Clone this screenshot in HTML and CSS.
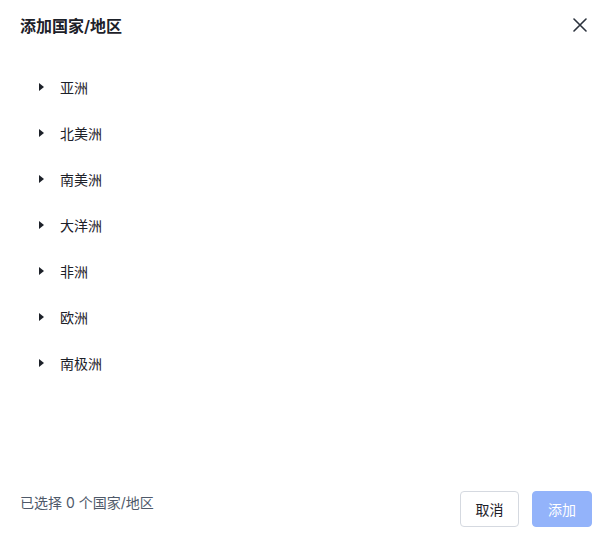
FILE: index.html
```html
<!DOCTYPE html>
<html lang="zh-CN">
<head>
    <meta charset="UTF-8">
    <meta name="viewport" content="width=device-width, initial-scale=1.0">
    <title>添加国家/地区</title>
    <link rel="stylesheet" href="styles.css">
</head>
<body>
    <div class="modal">
        <div class="modal-header">
            <span class="modal-title">添加国家/地区</span>
            <button class="close-btn" aria-label="关闭">
                <svg width="14" height="14" viewBox="0 0 14 14">
                    <path d="M1 1L13 13M13 1L1 13" stroke="#2b323d" stroke-width="1.6" stroke-linecap="round"/>
                </svg>
            </button>
        </div>

        <ul class="tree">
            <li class="tree-node"><span class="caret"></span>亚洲</li>
            <li class="tree-node"><span class="caret"></span>北美洲</li>
            <li class="tree-node"><span class="caret"></span>南美洲</li>
            <li class="tree-node"><span class="caret"></span>大洋洲</li>
            <li class="tree-node"><span class="caret"></span>非洲</li>
            <li class="tree-node"><span class="caret"></span>欧洲</li>
            <li class="tree-node"><span class="caret"></span>南极洲</li>
        </ul>

        <div class="modal-footer">
            <span class="selected-count">已选择 0 个国家/地区</span>
            <div class="actions">
                <button class="btn btn-cancel">取消</button>
                <button class="btn btn-primary" disabled>添加</button>
            </div>
        </div>
    </div>
</body>
</html>
```

FILE: styles.css
```css
body {
    margin: 0;
    background-color: #ffffff;
    font-family: Inter, "Noto Sans CJK SC", sans-serif;
    color: #1d2129;
}

.modal {
    display: flex;
    flex-direction: column;
    height: 536px;
    width: 615px;
}

.modal-header {
    display: flex;
    justify-content: space-between;
    align-items: center;
    height: 50px;
    padding: 0 28px 0 20px;
}

.modal-title {
    font-size: 16px;
    font-weight: 600;
}

.close-btn {
    display: flex;
    padding: 0;
    border: none;
    background: none;
    cursor: pointer;
}

.tree {
    flex: 1;
    list-style: none;
    margin: 14px 0 0;
    padding: 0;
}

.tree-node {
    display: flex;
    align-items: center;
    height: 46px;
    padding-left: 39px;
    font-size: 14px;
    color: #1d2129;
}

/* triangulito del nodo */
.caret {
    width: 0;
    height: 0;
    border-top: 4px solid transparent;
    border-bottom: 4px solid transparent;
    border-left: 5px solid #1d2129;
    margin-right: 16px;
}

.modal-footer {
    display: flex;
    justify-content: space-between;
    align-items: flex-start;
    padding: 0 23px 9px 20px;
}

.selected-count {
    font-size: 14px;
    line-height: 22px;
    margin-top: 1px;
    color: #4e5969;
}

.actions {
    display: flex;
    gap: 13px;
}

.btn {
    height: 36px;
    padding: 0;
    border-radius: 4px;
    font-family: inherit;
    font-size: 14px;
    white-space: nowrap;
    cursor: pointer;
}

.btn-cancel {
    background-color: #ffffff;
    border: 1px solid #d5d9e0;
    color: #1d2129;
    width: 59px;
}

.btn-primary {
    background-color: #93b3fa;
    border: 1px solid #93b3fa;
    color: #ffffff;
    width: 60px;
}

.btn-primary:disabled {
    cursor: not-allowed;
}
```
